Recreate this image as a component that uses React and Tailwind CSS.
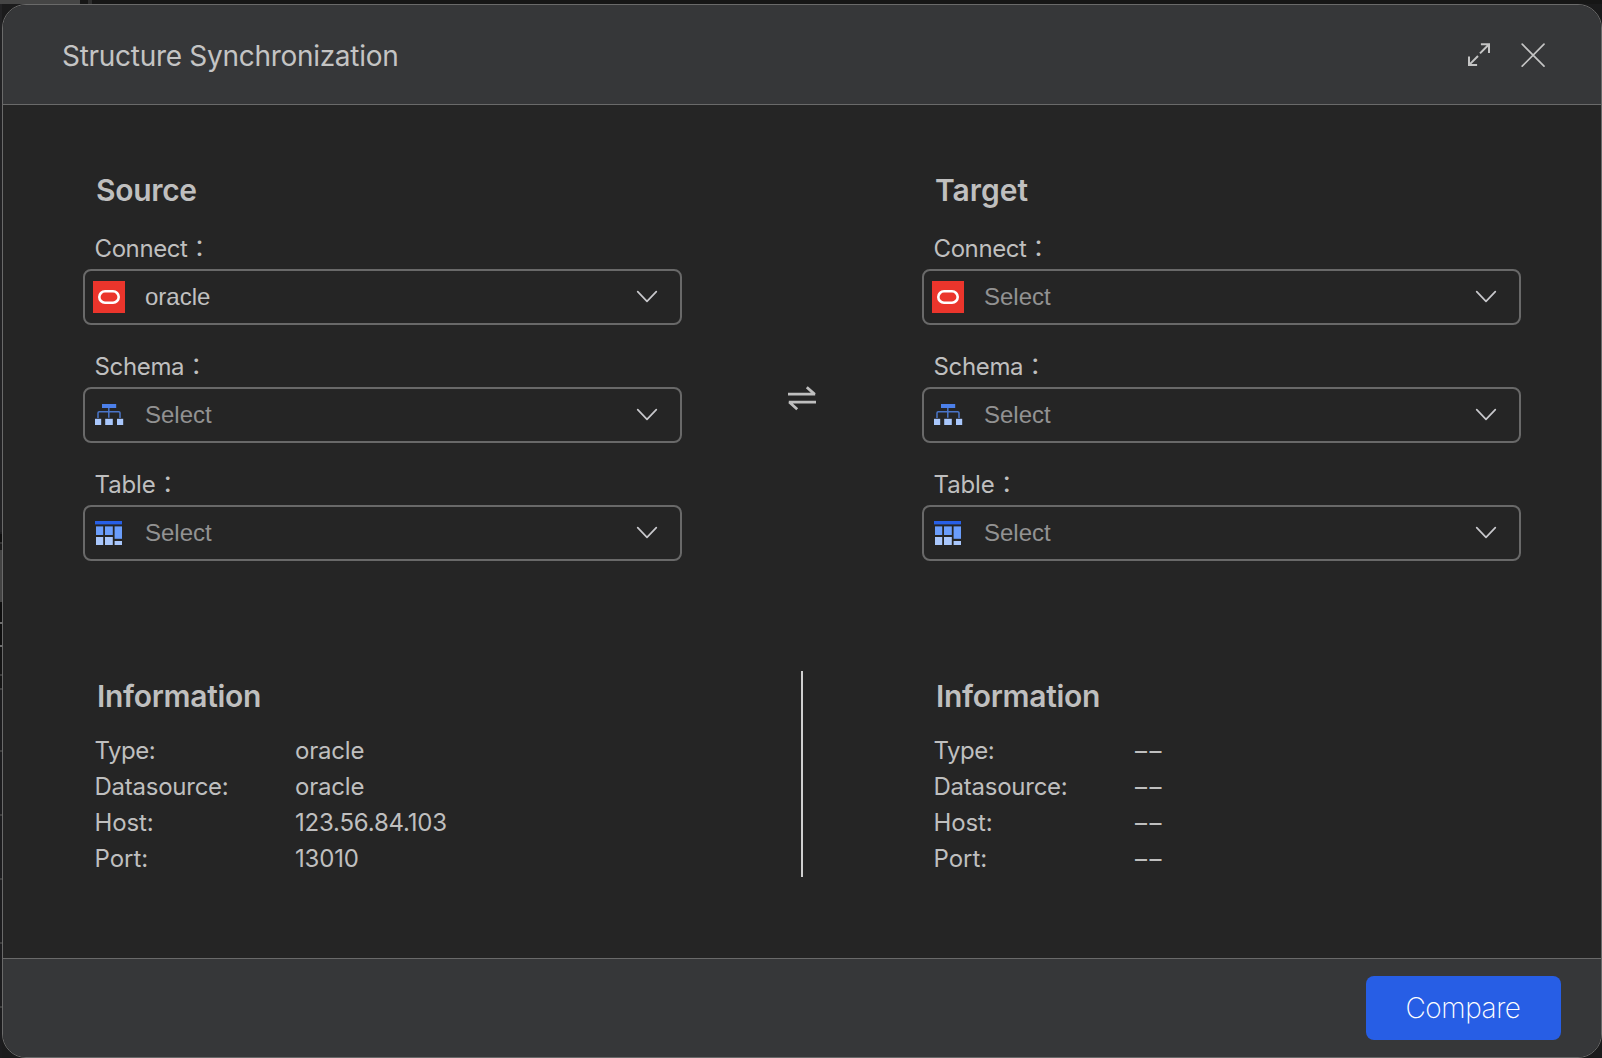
const inter = "font-['Inter','Noto_Sans_CJK_TC',sans-serif]";

function OracleIcon() {
  return (
    <svg className="h-8 w-8 shrink-0" viewBox="0 0 32 32" fill="none">
      <rect width="32" height="32" fill="#eb352c" />
      <rect x="6.3" y="10.3" width="19.4" height="11.4" rx="5.7" stroke="#fff" strokeWidth="2.6" />
    </svg>
  );
}

function SchemaIcon() {
  return (
    <svg className="h-8 w-8 shrink-0" viewBox="0 0 32 32" fill="none">
      <path d="M15.8 9v9.7M5 19v-5a1.2 1.2 0 0 1 1.2-1.2h19.6A1.2 1.2 0 0 1 27 14v5" stroke="#4a75c9" strokeWidth="1.5" />
      <rect x="9" y="5" width="14.2" height="4" fill="#4c80ea" />
      <rect x="2" y="19.8" width="6.2" height="6.2" fill="#a9c7fc" />
      <rect x="12.2" y="19.8" width="7.6" height="6.2" fill="#a9c7fc" />
      <rect x="24" y="19.8" width="6.2" height="6.2" fill="#a9c7fc" />
    </svg>
  );
}

function TableIcon() {
  return (
    <svg className="h-8 w-8 shrink-0" viewBox="0 0 32 32" fill="none">
      <rect x="2" y="4" width="27" height="3.4" fill="#275fe6" />
      <g fill="#6a9dfb">
        <rect x="3" y="9.4" width="7.2" height="8.6" />
        <rect x="12" y="9.4" width="7.8" height="8.6" />
        <rect x="21.6" y="9.4" width="7.4" height="12.4" />
      </g>
      <g fill="#a9c7fc">
        <rect x="3" y="20" width="7.2" height="8" />
        <rect x="12" y="20" width="7.8" height="8" />
        <rect x="21.6" y="24" width="7.4" height="4" />
      </g>
    </svg>
  );
}

function Select({ icon, value }) {
  return (
    <div className="flex h-14 w-full items-center rounded-lg border-2 border-[#696969] pr-[21px] pl-2">
      {icon}
      <span
        className={`ml-5 flex-1 font-['Liberation_Sans',Arial,sans-serif] text-2xl ${value ? "text-[#c0c0c0]" : "text-[#929292]"}`}
      >
        {value || "Select"}
      </span>
      <svg className="h-6 w-6" viewBox="0 0 24 24" fill="none" stroke="#c8c8cc" strokeWidth="1.7" strokeLinecap="round" strokeLinejoin="round">
        <path d="M2.7 6.7 12 16.3l9.3-9.6" />
      </svg>
    </div>
  );
}

function Field({ label, tracking, icon, value }) {
  return (
    <div className="mb-[23px]">
      <div className="flex h-[39px] pt-px pl-[11.5px] text-2xl leading-9">
        <span className={tracking}>{label}</span>
        <span className="font-['Noto_Sans_CJK_TC',sans-serif] leading-[32px]">：</span>
      </div>
      <Select icon={icon} value={value} />
    </div>
  );
}

function Connection({ title, tracking, value }) {
  return (
    <section className="w-[599px]">
      <h2 className={`mb-5 pl-[13px] text-[30px] leading-10 font-semibold ${tracking}`}>{title}</h2>
      <Field label="Connect" tracking="tracking-[-0.4px]" icon={<OracleIcon />} value={value} />
      <Field label="Schema" tracking="tracking-[-0.35px]" icon={<SchemaIcon />} />
      <Field label="Table" tracking="tracking-[-0.1px]" icon={<TableIcon />} />
    </section>
  );
}

const rows = [
  ["Type:", "tracking-[-0.5px]"],
  ["Datasource:", "tracking-[-0.25px]"],
  ["Host:", "tracking-[-0.15px]"],
  ["Port:", "tracking-normal"],
];

function Information({ values, valueClass }) {
  return (
    <section className="w-[599px] pt-[5px]">
      <h2 className="mb-[17px] pl-3.5 text-[30px] leading-10 font-semibold tracking-[-0.3px]">Information</h2>
      <dl className="text-2xl leading-9">
        {rows.map(([label, tracking], i) => (
          <div key={label} className="flex pl-[11.5px]">
            <dt className={`w-[200.5px] ${tracking}`}>{label}</dt>
            <dd className={valueClass}>{values[i]}</dd>
          </div>
        ))}
      </dl>
    </section>
  );
}

function EdgeStrip() {
  return (
    <div className="flex w-[2px] shrink-0 flex-col bg-[#1c1c1e]">
      <div className="h-[528px] bg-[#222224]" />
      <div className="h-[2px]" />
      <div className="h-[8px] bg-[#0e0e0e]" />
      <div className="h-[2px] bg-[#333]" />
      <div className="h-[6px] bg-[#1a1a1a]" />
      <div className="h-[52px] bg-[#434343]" />
      <div className="h-[20px] bg-[#0e0e0e]" />
      <div className="h-[2px] bg-[#6e6e6e]" />
      <div className="h-[21px] bg-[#0e0e0e]" />
      <div className="h-[2px] bg-[#6e6e6e]" />
      <div className="h-[27px] bg-[#141414]" />
      <div className="h-[2px] bg-[#3a3a3a]" />
      <div className="h-[12px] bg-[#141414]" />
      {["h-[2px] mb-[60px]", "h-[2px] mb-[62px]", "h-[2px] mb-[62px]", "h-[2px] mb-[62px]", "h-[2px] mb-[62px]", "h-[2px]"].map((c, i) => (
        <div key={i} className={`shrink-0 bg-[#3d3d3d] ${c}`} />
      ))}
    </div>
  );
}

export default function App() {
  return (
    <div className={`flex h-[1058px] w-[1602px] flex-col overflow-hidden bg-[#1b1b1c] text-[#bfbfbf] ${inter}`}>
      <div className="flex h-1 shrink-0 bg-[#161616]">
        <div className="h-1 w-20 bg-[#454545]" />
        <div className="ml-2 h-1 w-1 bg-[#2e2e2e]" />
      </div>
      <div className="flex min-h-0 flex-1">
        <EdgeStrip />
        <div className="flex w-[1600px] shrink-0 flex-col overflow-hidden rounded-[24px] border border-[#6a6a6a] bg-[#252525]">
          <header className="flex h-[100px] shrink-0 items-center border-b border-[#6a6a6a] bg-[#363739] pr-14 pl-[59px]">
            <h1 className="flex-1 pt-[2px] text-[28px] leading-10 tracking-[-0.29px] text-[#c4c4c4]">Structure Synchronization</h1>
            <svg className="mr-[30px] h-6 w-6" viewBox="0 0 24 24" fill="none" stroke="#c4c4c4" strokeWidth="2">
              <path d="M13.9 1.3H22V9.9M21.6 1.7 13 10.4M10.1 22H2V13.6M2.4 21.6 11 13" />
            </svg>
            <svg className="h-6 w-6" viewBox="0 0 24 24" fill="none" stroke="#c4c4c4" strokeWidth="1.7" strokeLinecap="round">
              <path d="M1.2 1.2l21.8 22M23 1.2 1.2 23.2" />
            </svg>
          </header>

          <main className="flex-1 pt-[65px] pl-20">
            <div className="flex">
              <Connection title="Source" tracking="tracking-[-0.3px]" value="oracle" />
              <div className="flex w-60 justify-center pt-[213px]">
                <svg className="h-7 w-7" viewBox="0 0 28 28" fill="none" stroke="#bfbfbf" strokeWidth="2.8">
                  <path d="M0 11.2h27.2M18.8 4.2l8 7.2" />
                  <path d="M28 19.2H.8M1.2 19l8 7.2" />
                </svg>
              </div>
              <Connection title="Target" tracking="tracking-normal" />
            </div>
            <div className="mt-[87px] flex">
              <Information values={["oracle", "oracle", "123.56.84.103", "13010"]} valueClass="tracking-[-0.2px]" />
              <div className="flex w-60 justify-center">
                <div className="h-[206px] w-[2px] bg-[#cfcfcf]" />
              </div>
              <Information values={["––", "––", "––", "––"]} valueClass="pl-px tracking-[2.4px]" />
            </div>
          </main>

          <footer className="flex h-[99px] shrink-0 items-start justify-end border-t border-[#6a6a6a] bg-[#363739] pt-[17px] pr-10">
            <button className="h-16 w-[195px] rounded-lg bg-[#275ee5] pr-px text-[28px] font-extralight tracking-[-0.45px] text-white">
              Compare
            </button>
          </footer>
        </div>
      </div>
    </div>
  );
}
